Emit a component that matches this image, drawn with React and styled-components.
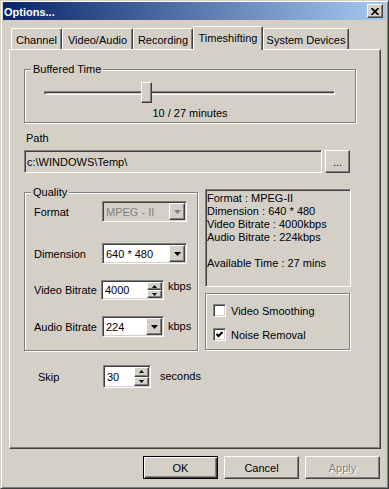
import React from "react";
import styled, { createGlobalStyle, css } from "styled-components";

const GlobalStyle = createGlobalStyle`
  html, body {
    margin: 0;
    padding: 0;
    background: #d4d0c8;
  }
  body {
    font-family: "Liberation Sans", Arial, sans-serif;
    font-size: 11px;
    color: #000;
  }
  * {
    box-sizing: border-box;
  }
`;

// classic 3D edges
const raised = css`
  background: #d4d0c8;
  border: 1px solid;
  border-color: #fff #404040 #404040 #fff;
  box-shadow: inset -1px -1px 0 #808080;
`;
const sunken = css`
  border: 1px solid;
  border-color: #808080 #fff #fff #808080;
  box-shadow: inset 1px 1px 0 #404040, inset -1px -1px 0 #d4d0c8;
`;
const etched = css`
  border: 1px solid #808080;
  box-shadow: inset 1px 1px 0 #fff, 1px 1px 0 #fff;
`;

const Window = styled.div`
  width: 389px;
  height: 489px;
  background: #d4d0c8;
  border: 1px solid;
  border-color: #d4d0c8 #404040 #404040 #d4d0c8;
  box-shadow: inset 1px 1px 0 #fff, inset -1px -1px 0 #808080;
  padding: 1px 2px 2px;
  display: flex;
  flex-direction: column;
`;

const TitleBar = styled.div`
  height: 18px;
  display: flex;
  align-items: center;
  justify-content: space-between;
  padding: 0 3px 0 1px;
  background: linear-gradient(to right, #0a246a, #a6caf0);
`;

const Title = styled.span`
  color: #fff;
  font-weight: bold;
  font-size: 11px;
  padding-top: 1px;
`;

const CloseButton = styled.div`
  ${raised};
  width: 16px;
  height: 14px;
  display: flex;
  align-items: center;
  justify-content: center;
  padding-right: 1px;
`;

const TabRow = styled.div`
  display: flex;
  align-items: flex-end;
  height: 23px;
  margin-top: 6px;
  padding-left: 8px;
`;

const Tab = styled.div`
  width: ${(p) => p.$w}px;
  height: ${(p) => (p.$active ? 24 : 21)}px;
  margin-bottom: ${(p) => (p.$active ? -1 : 0)}px;
  position: ${(p) => (p.$active ? "relative" : "static")};
  z-index: ${(p) => (p.$active ? 1 : 0)};
  background: #d4d0c8;
  border-top: 1px solid #fff;
  border-left: 1px solid #fff;
  border-right: 1px solid #404040;
  border-radius: 2px 2px 0 0;
  box-shadow: inset -1px 0 0 #808080;
  text-align: center;
  line-height: 13px;
  padding-top: 5px;
  white-space: nowrap;
`;

const Panel = styled.div`
  width: 372px;
  height: 400px;
  margin-left: 6px;
  border: 1px solid;
  border-color: #fff #404040 #404040 #fff;
  box-shadow: inset -1px -1px 0 #808080;
`;

const Group = styled.div`
  ${etched};
  position: relative;
  width: ${(p) => p.$w}px;
  height: ${(p) => p.$h}px;
`;

const GroupLabel = styled.span`
  position: absolute;
  top: -7px;
  left: 6px;
  padding: 0 2px;
  line-height: 13px;
  background: #d4d0c8;
`;

const BufferedGroup = styled(Group)`
  margin: 19px 0 0 14px;
  padding-top: 12px;
`;

const SliderWrap = styled.div`
  position: relative;
  height: 21px;
  margin: 0 20px 0 19px;
  padding-top: 9px;
`;

const Track = styled.div`
  height: 4px;
  border: 1px solid;
  border-color: #808080 #fff #fff #808080;
  box-shadow: inset 1px 1px 0 #404040, inset -1px -1px 0 #d4d0c8;
`;

const Thumb = styled.div`
  ${raised};
  position: absolute;
  top: 0;
  width: 11px;
  height: 21px;
`;

const SliderText = styled.div`
  margin-top: 4px;
  text-align: center;
  line-height: 13px;
`;

const PathLabel = styled.div`
  margin: 9px 0 0 16px;
  line-height: 13px;
`;

const PathRow = styled.div`
  display: flex;
  gap: 3px;
  height: 23px;
  margin: 5px 0 0 14px;
`;

const PathInput = styled.div`
  ${sunken};
  width: 298px;
  background: #d4d0c8;
  padding-left: 2px;
  display: flex;
  align-items: center;
`;

const Button = styled.div`
  ${raised};
  width: ${(p) => p.$w}px;
  height: 23px;
  display: flex;
  align-items: center;
  justify-content: center;
  color: ${(p) => (p.$disabled ? "#808080" : "#000")};
  text-shadow: ${(p) => (p.$disabled ? "1px 1px 0 #fff" : "none")};
  ${(p) =>
    p.$default &&
    css`
      border: 1px solid #000;
      box-shadow: inset 1px 1px 0 #fff, inset -1px -1px 0 #404040,
        inset -2px -2px 0 #808080;
    `}
`;

const QualityRow = styled.div`
  display: flex;
  align-items: flex-start;
  gap: 7px;
  margin: 16px 0 0 14px;
`;

const QualityGroup = styled(Group)`
  margin-top: 3px;
`;

const FieldRow = styled.div`
  display: flex;
  align-items: center;
  height: ${(p) => p.$h || 21}px;
  margin-top: ${(p) => p.$top}px;
`;

const FieldLabel = styled.span`
  width: ${(p) => p.$w ?? 77}px;
  padding-left: ${(p) => p.$pad ?? 9}px;
  flex-shrink: 0;
`;

const Select = styled.div`
  ${sunken};
  width: ${(p) => p.$w}px;
  height: 100%;
  display: flex;
  align-items: stretch;
  padding: 1px;
  background: ${(p) => (p.$disabled ? "#d4d0c8" : "#fff")};
  color: ${(p) => (p.$disabled ? "#808080" : "#000")};
`;

const FieldText = styled.span`
  flex: 1;
  display: flex;
  align-items: center;
  padding-left: 2px;
  white-space: nowrap;
`;

const ArrowButton = styled.div`
  ${raised};
  width: 16px;
  display: flex;
  align-items: center;
  justify-content: center;
`;

const SpinButtons = styled.div`
  width: 15px;
  display: flex;
  flex-direction: column;
`;

const SpinHalf = styled.div`
  ${raised};
  flex: 1;
  display: flex;
  align-items: center;
  justify-content: center;
`;

const Unit = styled.span`
  margin-left: ${(p) => p.$gap || 4}px;
  align-self: ${(p) => (p.$raise ? "flex-start" : "center")};
  line-height: 13px;
`;

const RightCol = styled.div`
  width: 146px;
  display: flex;
  flex-direction: column;
  gap: 6px;
`;

const InfoBox = styled.div`
  height: 98px;
  border: 1px solid;
  border-color: #808080 #fff #fff #808080;
  box-shadow: inset 1px 1px 0 #404040;
  padding: 2px 0 0 1px;
  line-height: 13px;
  white-space: nowrap;
`;

const InfoLine = styled.div`
  height: 13px;
`;

const CheckGroup = styled.div`
  ${etched};
  width: 145px;
  height: 57px;
  padding: 10px 0 0 7px;
  display: flex;
  flex-direction: column;
  gap: 11px;
`;

const CheckRow = styled.label`
  display: flex;
  align-items: center;
  gap: 5px;
  height: 13px;
`;

const CheckBox = styled.span`
  ${sunken};
  width: 13px;
  height: 13px;
  background: #fff;
  display: flex;
  align-items: center;
  justify-content: center;
`;

const SkipRow = styled.div`
  display: flex;
  align-items: center;
  height: 23px;
  margin: 14px 0 0 28px;
`;

const ButtonRow = styled.div`
  display: flex;
  justify-content: flex-end;
  gap: 6px;
  margin: 7px 6px 0 0;
`;

const DownArrow = ({ color = "#000" }) => (
  <svg width="7" height="4" viewBox="0 0 7 4">
    <polygon points="0,0 7,0 3.5,4" fill={color} />
  </svg>
);

const SmallArrow = ({ up }) => (
  <svg width="5" height="3" viewBox="0 0 5 3">
    <polygon points={up ? "0,3 5,3 2.5,0" : "0,0 5,0 2.5,3"} fill="#000" />
  </svg>
);

function Combo({ width, value, disabled }) {
  return (
    <Select $w={width} $disabled={disabled}>
      <FieldText>{value}</FieldText>
      <ArrowButton>
        <DownArrow color={disabled ? "#808080" : "#000"} />
      </ArrowButton>
    </Select>
  );
}

function Spin({ width, value }) {
  return (
    <Select $w={width}>
      <FieldText>{value}</FieldText>
      <SpinButtons>
        <SpinHalf>
          <SmallArrow up />
        </SpinHalf>
        <SpinHalf>
          <SmallArrow />
        </SpinHalf>
      </SpinButtons>
    </Select>
  );
}

function Check({ checked, children }) {
  return (
    <CheckRow>
      <CheckBox>
        {checked && (
          <svg width="7" height="7" viewBox="0 0 7 7">
            <polyline
              points="0.5,3 2.5,5 6.5,1"
              fill="none"
              stroke="#000"
              strokeWidth="2"
            />
          </svg>
        )}
      </CheckBox>
      {children}
    </CheckRow>
  );
}

const tabs = [
  { name: "Channel", w: 51 },
  { name: "Video/Audio", w: 71 },
  { name: "Recording", w: 60 },
  { name: "Timeshifting", w: 70, active: true },
  { name: "System Devices", w: 86 },
];

export default function App() {
  const buffered = 10;
  const total = 27;
  const thumbLeft = Math.round(((buffered - 1) / (total - 1)) * (291 - 11));

  return (
    <>
      <GlobalStyle />
      <Window>
        <TitleBar>
          <Title>Options...</Title>
          <CloseButton>
            <svg width="8" height="7" viewBox="0 0 8 7">
              <path d="M0.5 0 L7.5 7 M7.5 0 L0.5 7" stroke="#000" strokeWidth="1.7" />
            </svg>
          </CloseButton>
        </TitleBar>

        <TabRow>
          {tabs.map((t) => (
            <Tab key={t.name} $w={t.w} $active={t.active}>
              {t.name}
            </Tab>
          ))}
        </TabRow>

        <Panel>
          <BufferedGroup $w={332} $h={54}>
            <GroupLabel>Buffered Time</GroupLabel>
            <SliderWrap>
              <Track />
              <Thumb style={{ left: thumbLeft }} />
            </SliderWrap>
            <SliderText>
              {buffered} / {total} minutes
            </SliderText>
          </BufferedGroup>

          <PathLabel>Path</PathLabel>
          <PathRow>
            <PathInput>c:\WINDOWS\Temp\</PathInput>
            <Button $w={25}>...</Button>
          </PathRow>

          <QualityRow>
            <QualityGroup $w={174} $h={159}>
              <GroupLabel>Quality</GroupLabel>
              <FieldRow $top={8}>
                <FieldLabel>Format</FieldLabel>
                <Combo width={85} value="MPEG - II" disabled />
              </FieldRow>
              <FieldRow $top={21}>
                <FieldLabel>Dimension</FieldLabel>
                <Combo width={85} value="640 * 480" />
              </FieldRow>
              <FieldRow $top={16} $h={20}>
                <FieldLabel $w={76}>Video Bitrate</FieldLabel>
                <Spin width={63} value="4000" />
                <Unit $raise>kbps</Unit>
              </FieldRow>
              <FieldRow $top={16}>
                <FieldLabel>Audio Bitrate</FieldLabel>
                <Combo width={62} value="224" />
                <Unit>kbps</Unit>
              </FieldRow>
            </QualityGroup>

            <RightCol>
              <InfoBox>
                <InfoLine>Format : MPEG-II</InfoLine>
                <InfoLine>Dimension : 640 * 480</InfoLine>
                <InfoLine>Video Bitrate : 4000kbps</InfoLine>
                <InfoLine>Audio Bitrate : 224kbps</InfoLine>
                <InfoLine />
                <InfoLine>Available Time : 27 mins</InfoLine>
              </InfoBox>
              <CheckGroup>
                <Check>Video Smoothing</Check>
                <Check checked>Noise Removal</Check>
              </CheckGroup>
            </RightCol>
          </QualityRow>

          <SkipRow>
            <FieldLabel $w={65} $pad={0}>
              Skip
            </FieldLabel>
            <Spin width={48} value="30" />
            <Unit $gap={9}>seconds</Unit>
          </SkipRow>
        </Panel>

        <ButtonRow>
          <Button $w={75} $default>
            OK
          </Button>
          <Button $w={75}>Cancel</Button>
          <Button $w={75} $disabled>
            Apply
          </Button>
        </ButtonRow>
      </Window>
    </>
  );
}
